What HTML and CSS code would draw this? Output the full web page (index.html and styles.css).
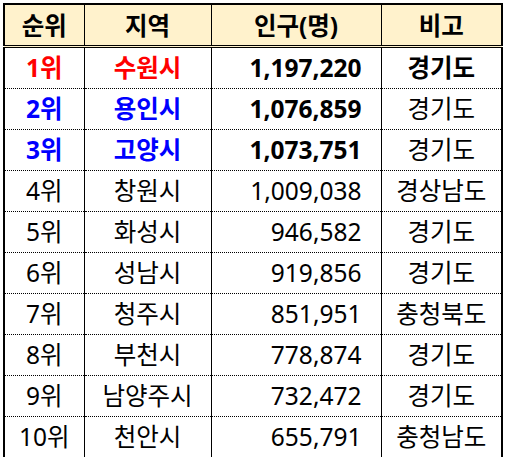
FILE: index.html
```html
<!DOCTYPE html>
<html lang="ko">
<head>
<meta charset="utf-8">
<link rel="stylesheet" href="styles.css">
</head>
<body>
<table class="rank">
  <colgroup>
    <col class="c-rank">
    <col class="c-city">
    <col class="c-pop">
    <col class="c-note">
  </colgroup>
  <thead>
    <tr>
      <th>순위</th><th>지역</th><th>인구(명)</th><th>비고</th>
    </tr>
  </thead>
  <tbody>
    <tr class="top1"><td class="hl red">1위</td><td class="hl red">수원시</td><td class="num b">1,197,220</td><td class="b">경기도</td></tr>
    <tr><td class="hl blue">2위</td><td class="hl blue">용인시</td><td class="num b">1,076,859</td><td>경기도</td></tr>
    <tr><td class="hl blue">3위</td><td class="hl blue">고양시</td><td class="num b">1,073,751</td><td>경기도</td></tr>
    <tr><td>4위</td><td>창원시</td><td class="num">1,009,038</td><td>경상남도</td></tr>
    <tr><td>5위</td><td>화성시</td><td class="num">946,582</td><td>경기도</td></tr>
    <tr><td>6위</td><td>성남시</td><td class="num">919,856</td><td>경기도</td></tr>
    <tr><td>7위</td><td>청주시</td><td class="num">851,951</td><td>충청북도</td></tr>
    <tr><td>8위</td><td>부천시</td><td class="num">778,874</td><td>경기도</td></tr>
    <tr><td>9위</td><td>남양주시</td><td class="num">732,472</td><td>경기도</td></tr>
    <tr><td>10위</td><td>천안시</td><td class="num">655,791</td><td>충청남도</td></tr>
  </tbody>
</table>
</body>
</html>
```
FILE: styles.css
```css
html, body {
  margin: 0;
  padding: 0;
  background: #ffffff;
}

body {
  padding: 3px 0 0 3px;
  font-family: "Noto Sans", "Noto Sans CJK KR", sans-serif;
  color: #000000;
}

.rank {
  border-collapse: collapse;
  table-layout: fixed;
  width: 500px;
  border: 2px solid #000000;
  font-size: 24.5px;
  line-height: 1;
}

.c-rank { width: 80px; }
.c-city { width: 127px; }
.c-pop { width: 170px; }
.c-note { width: 121px; }

.rank th {
  background: #fff2cc;
  font-weight: 700;
  height: 38px;
  padding: 2px 0 0 0;
  border-left: 1px solid #000000;
  border-right: 1px solid #000000;
  border-bottom: 3px double #000000;
  text-align: center;
  vertical-align: middle;
}

.rank td {
  height: 40px;
  padding: 0;
  border-left: 1px solid #000000;
  border-right: 1px solid #000000;
  border-bottom: 1px dotted #000000;
  text-align: center;
  vertical-align: middle;
  font-weight: 400;
}

.rank tbody tr:last-child td {
  border-bottom: 2px solid #000000;
}

.rank td.num {
  text-align: right;
  padding-right: 19px;
}

.rank td.b,
.rank td.hl {
  font-weight: 700;
}

.red { color: #ff0000; }
.blue { color: #0000ff; }
```
